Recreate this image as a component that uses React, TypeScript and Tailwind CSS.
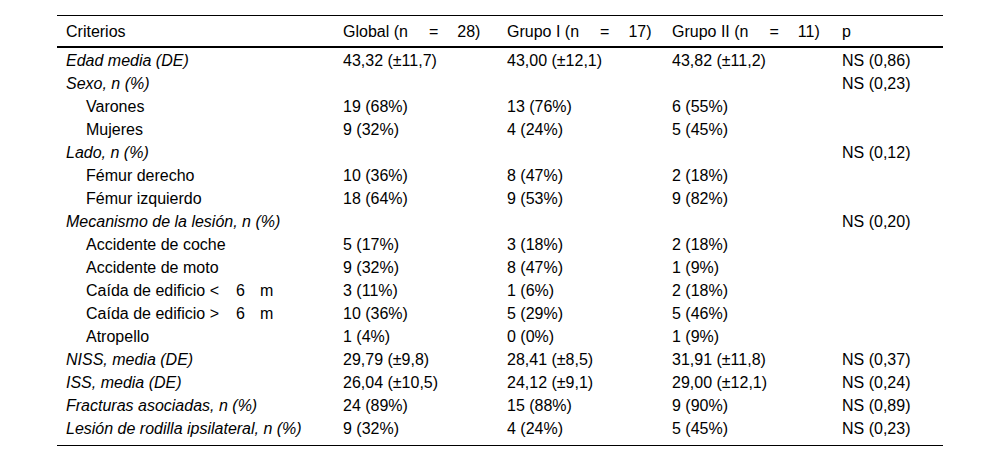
import React from "react";

type Row = {
  label: React.ReactNode;
  italic?: boolean;
  indent?: boolean;
  g?: string;
  g1?: string;
  g2?: string;
  p?: string;
};

const Sp = ({ w }: { w: string }) => <span className={`inline-block ${w}`} />;

const rows: Row[] = [
  { label: "Edad media (DE)", italic: true, g: "43,32 (±11,7)", g1: "43,00 (±12,1)", g2: "43,82 (±11,2)", p: "NS (0,86)" },
  { label: "Sexo, n (%)", italic: true, p: "NS (0,23)" },
  { label: "Varones", indent: true, g: "19 (68%)", g1: "13 (76%)", g2: "6 (55%)" },
  { label: "Mujeres", indent: true, g: "9 (32%)", g1: "4 (24%)", g2: "5 (45%)" },
  { label: "Lado, n (%)", italic: true, p: "NS (0,12)" },
  { label: "Fémur derecho", indent: true, g: "10 (36%)", g1: "8 (47%)", g2: "2 (18%)" },
  { label: "Fémur izquierdo", indent: true, g: "18 (64%)", g1: "9 (53%)", g2: "9 (82%)" },
  { label: "Mecanismo de la lesión, n (%)", italic: true, p: "NS (0,20)" },
  { label: "Accidente de coche", indent: true, g: "5 (17%)", g1: "3 (18%)", g2: "2 (18%)" },
  { label: "Accidente de moto", indent: true, g: "9 (32%)", g1: "8 (47%)", g2: "1 (9%)" },
  {
    label: (
      <>
        Caída de edificio &lt;<Sp w="w-[17px]" />6<Sp w="w-[15px]" />m
      </>
    ),
    indent: true,
    g: "3 (11%)",
    g1: "1 (6%)",
    g2: "2 (18%)",
  },
  {
    label: (
      <>
        Caída de edificio &gt;<Sp w="w-[17px]" />6<Sp w="w-[15px]" />m
      </>
    ),
    indent: true,
    g: "10 (36%)",
    g1: "5 (29%)",
    g2: "5 (46%)",
  },
  { label: "Atropello", indent: true, g: "1 (4%)", g1: "0 (0%)", g2: "1 (9%)" },
  { label: "NISS, media (DE)", italic: true, g: "29,79 (±9,8)", g1: "28,41 (±8,5)", g2: "31,91 (±11,8)", p: "NS (0,37)" },
  { label: "ISS, media (DE)", italic: true, g: "26,04 (±10,5)", g1: "24,12 (±9,1)", g2: "29,00 (±12,1)", p: "NS (0,24)" },
  { label: "Fracturas asociadas, n (%)", italic: true, g: "24 (89%)", g1: "15 (88%)", g2: "9 (90%)", p: "NS (0,89)" },
  { label: "Lesión de rodilla ipsilateral, n (%)", italic: true, g: "9 (32%)", g1: "4 (24%)", g2: "5 (45%)", p: "NS (0,23)" },
];

const grid = "grid grid-cols-[277px_164px_165px_170px_110px]";

export default function App() {
  return (
    <div
      className="w-[1000px] h-[461px] bg-white pt-[15px] pl-[57px] text-[16px] leading-[18px] text-black"
      style={{ fontFamily: '"Liberation Sans", Arial, sans-serif' }}
    >
      <div className="w-[886px] border-t border-b border-black">
        <div className={`${grid} h-[32px] items-center pt-[2px] border-b-2 border-black`}>
          <div className="pl-[9px]">Criterios</div>
          <div className="pl-[9px] whitespace-nowrap">
            Global (n<Sp w="w-[21px]" />=<Sp w="w-[19px]" />28)
          </div>
          <div className="pl-[9px] whitespace-nowrap">
            Grupo I (n<Sp w="w-[21px]" />=<Sp w="w-[19px]" />17)
          </div>
          <div className="pl-[9px] whitespace-nowrap">
            Grupo II (n<Sp w="w-[21px]" />=<Sp w="w-[19px]" />11)
          </div>
          <div className="pl-[9px]">p</div>
        </div>
        <div className="pt-[1px] pb-[5px]">
          {rows.map((r, i) => (
            <div key={i} className={`${grid} h-[23px] items-center`}>
              <div
                className={`whitespace-nowrap ${r.indent ? "pl-[29px]" : "pl-[9px]"} ${r.italic ? "italic" : ""}`}
              >
                {r.label}
              </div>
              <div className="pl-[9px] whitespace-nowrap">{r.g ?? ""}</div>
              <div className="pl-[9px] whitespace-nowrap">{r.g1 ?? ""}</div>
              <div className="pl-[9px] whitespace-nowrap">{r.g2 ?? ""}</div>
              <div className="pl-[9px] whitespace-nowrap">{r.p ?? ""}</div>
            </div>
          ))}
        </div>
      </div>
    </div>
  );
}
